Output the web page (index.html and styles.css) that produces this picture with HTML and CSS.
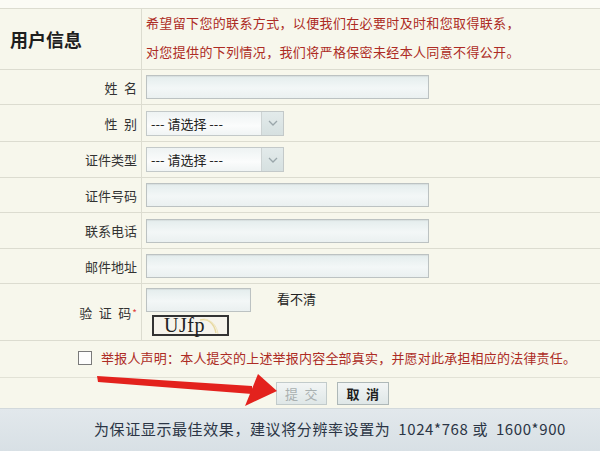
FILE: index.html
```html
<!DOCTYPE html>
<html lang="zh-CN">
<head>
<meta charset="utf-8">
<title>用户信息</title>
<link rel="stylesheet" href="styles.css">
</head>
<body>
<div class="form">
  <div class="row head">
    <div class="lab title">用户信息</div>
    <div class="val notice">希望留下您的联系方式，以便我们在必要时及时和您取得联系，<br>对您提供的下列情况，我们将严格保密未经本人同意不得公开。</div>
  </div>
  <div class="row h35">
    <div class="lab">姓&ensp;名</div>
    <div class="val"><span class="txt"></span></div>
  </div>
  <div class="row h37">
    <div class="lab">性&ensp;别</div>
    <div class="val"><span class="sel"><span class="sel-text">--- 请选择 ---</span><span class="sel-btn"><svg width="10" height="6" viewBox="0 0 10 6"><path d="M1 1 L5 5 L9 1" fill="none" stroke="#9aa6aa" stroke-width="1.3"/></svg></span></span></div>
  </div>
  <div class="row h36">
    <div class="lab">证件类型</div>
    <div class="val"><span class="sel"><span class="sel-text">--- 请选择 ---</span><span class="sel-btn"><svg width="10" height="6" viewBox="0 0 10 6"><path d="M1 1 L5 5 L9 1" fill="none" stroke="#9aa6aa" stroke-width="1.3"/></svg></span></span></div>
  </div>
  <div class="row h35">
    <div class="lab">证件号码</div>
    <div class="val"><span class="txt"></span></div>
  </div>
  <div class="row h36">
    <div class="lab">联系电话</div>
    <div class="val"><span class="txt"></span></div>
  </div>
  <div class="row h35">
    <div class="lab">邮件地址</div>
    <div class="val"><span class="txt"></span></div>
  </div>
  <div class="row h57">
    <div class="lab">验&ensp;证&ensp;码<sup class="req">*</sup></div>
    <div class="val captcha">
      <div class="cap-top"><span class="txt short"></span><span class="cant">看不清</span></div>
      <div class="cap-img"><span class="cap-text">UJfp</span><svg class="swirl" width="24" height="18" viewBox="0 0 24 18"><path d="M2 3 C10 1 16 6 18 16" fill="none" stroke="#e8d9a0" stroke-width="1.5"/><path d="M6 2 C14 3 19 9 20 17" fill="none" stroke="#efe4bc" stroke-width="1"/></svg></div>
    </div>
  </div>
  <div class="row h37 decl">
    <span class="chk"></span><span class="decl-text">举报人声明：本人提交的上述举报内容全部真实，并愿对此承担相应的法律责任。</span>
  </div>
  <div class="row btns">
    <span class="btn disabled">提&ensp;交</span><span class="btn">取&ensp;消</span>
  </div>
  <div class="foot">为保证显示最佳效果，建议将分辨率设置为&nbsp; 1024*768 或&nbsp; 1600*900</div>
</div>
<svg class="arrow" width="600" height="451" viewBox="0 0 600 451">
  <polygon points="97,376 252,386 252,394 98,382" fill="#e3221d"/>
  <polygon points="258,374 277,391 245,406" fill="#e3221d"/>
</svg>
</body>
</html>
```

FILE: styles.css
```css
html, body {
  margin: 0;
  padding: 0;
}
body {
  width: 600px;
  height: 451px;
  overflow: hidden;
  background: #fbfbf5;
  font-family: "Noto Sans CJK SC", "Noto Sans", sans-serif;
  color: #2a2a2a;
  position: relative;
}
.form {
  margin-top: 8px;
  border-top: 1px solid #dcdcd0;
  background: #f7f7ec;
  display: flex;
  flex-direction: column;
}
.row {
  display: flex;
  align-items: center;
  border-bottom: 1px solid #dcdcd0;
  box-sizing: border-box;
}
.head { height: 61px; align-items: stretch; }
.h35 { height: 35px; }
.h36 { height: 36px; }
.h37 { height: 37px; }
.h57 { height: 57px; }
.lab {
  width: 142px;
  flex: none;
  box-sizing: border-box;
  align-self: stretch;
  display: flex;
  align-items: center;
  justify-content: flex-end;
  padding-right: 4px;
  border-right: 1px solid #dcdcd0;
  font-size: 13px;
  color: #333;
}
.title {
  justify-content: flex-start;
  padding-left: 10px;
  font-size: 18px;
  font-weight: bold;
  color: #1e1e1e;
}
.val {
  padding-left: 4px;
  display: flex;
  align-items: center;
}
.notice {
  font-size: 13px;
  line-height: 29px;
  color: #ad2b24;
  padding-top: 0;
  margin-top: -1px;
  display: block;
  letter-spacing: 0.35px;
}
.txt {
  display: block;
  width: 283px;
  height: 24px;
  box-sizing: border-box;
  border: 1px solid #bcc2c2;
  background: linear-gradient(to bottom, #e4eded 0%, #f3f7f7 55%, #eaf0f0 100%);
  box-shadow: inset 0 1px 1px rgba(0,0,0,0.06);
}
.txt.short {
  width: 105px;
}
.sel {
  display: flex;
  width: 138px;
  height: 25px;
  box-sizing: border-box;
  border: 1px solid #c3c9c9;
  background: linear-gradient(to bottom, #eef3f3, #fbfcfc 60%, #f0f4f4);
  font-size: 13px;
  color: #222;
}
.sel-text {
  flex: 1;
  display: flex;
  align-items: center;
  padding-left: 4px;
}
.sel-btn {
  width: 21px;
  border-left: 1px solid #cdd3d3;
  display: flex;
  align-items: center;
  justify-content: center;
  background: linear-gradient(to bottom, #e3ebeb, #d6e0e0);
}
.req {
  color: #e04040;
  font-size: 10px;
  margin-left: 1px;
  vertical-align: 4px;
}
.captcha {
  flex-direction: column;
  align-items: flex-start;
  gap: 3px;
}
.cap-top {
  display: flex;
  align-items: center;
}
.cant {
  margin-left: 26px;
  margin-top: -4px;
  font-size: 13px;
  color: #222;
}
.cap-img {
  margin-left: 6px;
  width: 77px;
  height: 21px;
  box-sizing: border-box;
  border: 2px solid #333;
  background: #f6f4ec;
  position: relative;
  display: flex;
  align-items: center;
  padding-left: 10px;
}
.cap-text {
  font-family: "Liberation Serif", serif;
  font-size: 20px;
  line-height: 17px;
  color: #222;
  letter-spacing: 0.5px;
}
.swirl {
  position: absolute;
  left: 44px;
  top: 0;
}
.decl {
  padding-left: 78px;
  gap: 9px;
  border-bottom-color: #e2e2d6;
}
.chk {
  width: 14px;
  height: 14px;
  box-sizing: border-box;
  border: 1px solid #7a7a7a;
  background: #fdfdfd;
  margin-top: -3px;
}
.decl-text {
  font-size: 13px;
  color: #ad2b24;
  margin-top: -3px;
  letter-spacing: 0.2px;
}
.btns {
  height: 30px;
  border-bottom: none;
  padding-left: 276px;
  gap: 10px;
}
.btn {
  height: 23px;
  box-sizing: border-box;
  padding: 0 9px;
  border: 1px solid #aeb8b8;
  background: linear-gradient(to bottom, #f2f5f5, #dfe7e7);
  font-size: 13px;
  display: flex;
  align-items: center;
  color: #1e1e1e;
  font-weight: bold;
}
.btn.disabled {
  color: #a9b0b0;
  font-weight: normal;
  border-color: #c2cbcb;
  padding: 0 8px;
}
.foot {
  height: 43px;
  box-sizing: border-box;
  border-top: 1px solid #d2d9dc;
  background: linear-gradient(to bottom, #e2e8ec, #d8e0e5);
  display: flex;
  align-items: center;
  justify-content: center;
  padding-left: 60px;
  padding-bottom: 4px;
  font-size: 15px;
  letter-spacing: 0.6px;
  color: #2b3545;
}
.arrow {
  position: absolute;
  left: 0;
  top: 0;
  pointer-events: none;
}
```
